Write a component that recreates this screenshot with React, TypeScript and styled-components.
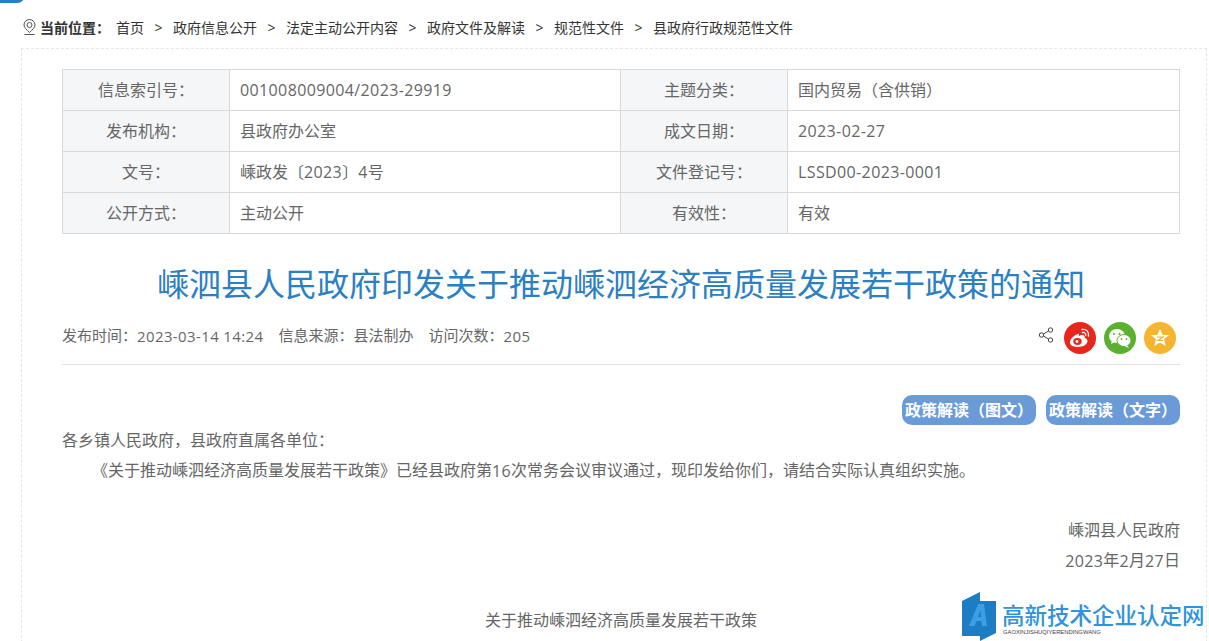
import styled, { createGlobalStyle } from "styled-components";

const FONT = `"Open Sans", "Noto Sans CJK SC", sans-serif`;

const GlobalStyle = createGlobalStyle`
  html, body {
    margin: 0;
    padding: 0;
    background: #fff;
    height: 641px;
    overflow: hidden;
  }
  body {
    font-family: ${FONT};
    color: #666;
  }
`;

const Page = styled.div`
  position: relative;
  width: 1209px;
  height: 641px;
  overflow: hidden;
`;

const TopAccent = styled.div`
  position: absolute;
  left: 0;
  top: -6px;
  width: 25px;
  height: 9px;
  background: #2b7fc3;
  border-bottom-right-radius: 8px;
`;

const Breadcrumb = styled.div`
  display: flex;
  align-items: center;
  height: 48px;
  padding: 6px 0 0 22px;
  box-sizing: border-box;
  font-size: 14px;
  color: #333;
`;

const CurrentLabel = styled.b`
  margin: 0 6px 0 3px;
  font-weight: 700;
`;

const Crumb = styled.span`
  white-space: nowrap;
`;

const Arrow = styled.span`
  display: inline-block;
  width: 29px;
  text-align: center;
`;

const Panel = styled.div`
  margin-left: 21px;
  width: 1186px;
  height: 640px;
  box-sizing: border-box;
  border: 1px dashed #e6e6e6;
  padding: 20px 27px 0 40px;
`;

const InfoTable = styled.div`
  display: grid;
  grid-template-columns: 167px 391px 167px 392px;
  grid-auto-rows: 41px;
  width: 1118px;
  border-top: 1px solid #d9d9d9;
  border-left: 1px solid #d9d9d9;
  box-sizing: border-box;
`;

const Cell = styled.div<{ $head?: boolean }>`
  display: flex;
  align-items: center;
  justify-content: ${(p) => (p.$head ? "center" : "flex-start")};
  padding: ${(p) => (p.$head ? "0 0 2px" : "0 0 2px 10px")};
  box-sizing: border-box;
  background: ${(p) => (p.$head ? "#f5f6f8" : "#fff")};
  border-right: 1px solid #d9d9d9;
  border-bottom: 1px solid #d9d9d9;
  font-size: 16px;
  color: #666;
  white-space: nowrap;
`;

const Num = styled.span`
  letter-spacing: 0.38px;
  position: relative;
  top: 1px;
`;

const Title = styled.h1`
  margin: 28px 0 0;
  width: 1118px;
  height: 44px;
  line-height: 44px;
  text-align: center;
  font-size: 32px;
  font-weight: 400;
  color: #2b7fc3;
  white-space: nowrap;
`;

const MetaRow = styled.div`
  display: flex;
  align-items: center;
  justify-content: space-between;
  width: 1118px;
  height: 58px;
  margin-top: 1px;
  box-sizing: border-box;
  border-bottom: 1px solid #e2e2e2;
  padding-bottom: 2px;
`;

const MetaText = styled.div`
  display: flex;
  gap: 15px;
  font-size: 15px;
  color: #666;
`;

const Share = styled.div`
  display: flex;
  align-items: center;
  gap: 8px;
  padding-right: 4px;
  margin-top: 6px;
`;

const ShareCircle = styled.span<{ $bg: string }>`
  display: flex;
  align-items: center;
  justify-content: center;
  width: 32px;
  height: 32px;
  border-radius: 50%;
  background: ${(p) => p.$bg};
`;

const ShareIcon = styled.svg`
  margin: -5px 2px 0 0;
`;

const Actions = styled.div`
  display: flex;
  justify-content: flex-end;
  gap: 10px;
  width: 1118px;
  margin-top: 30px;
`;

const ActionButton = styled.span`
  display: block;
  width: 134px;
  height: 30px;
  line-height: 30px;
  text-align: center;
  background: #6a9bd8;
  border-radius: 10px;
  color: #fff;
  font-size: 16px;
  font-weight: 700;
  white-space: nowrap;
`;

const Article = styled.div`
  width: 1118px;
  font-size: 16px;
  line-height: 30px;
  color: #666;
`;

const Para = styled.p<{ $indent?: boolean; $right?: boolean; $center?: boolean }>`
  margin: 0;
  text-indent: ${(p) => (p.$indent ? "30px" : "0")};
  text-align: ${(p) => (p.$right ? "right" : p.$center ? "center" : "left")};
  white-space: nowrap;
`;

const Gap = styled.div<{ $h: number }>`
  height: ${(p) => p.$h}px;
`;

const Watermark = styled.div`
  position: absolute;
  left: 962px;
  top: 591px;
  display: flex;
  align-items: flex-start;
  gap: 6px;
`;

const WatermarkText = styled.div`
  display: flex;
  flex-direction: column;
  margin-top: 12px;
`;

const WatermarkTitle = styled.div`
  font-size: 22.5px;
  line-height: 25px;
  font-weight: 500;
  color: #2f93dd;
  white-space: nowrap;
`;

const WatermarkSub = styled.div`
  margin-left: 1px;
  font-size: 5.8px;
  line-height: 8px;
  color: #444;
  white-space: nowrap;
  font-family: "Liberation Sans", sans-serif;
`;

const crumbs = ["首页", "政府信息公开", "法定主动公开内容", "政府文件及解读", "规范性文件", "县政府行政规范性文件"];

const rows = [
  ["信息索引号：", <Num>001008009004/2023-29919</Num>, "主题分类：", "国内贸易（含供销）"],
  ["发布机构：", "县政府办公室", "成文日期：", <Num>2023-02-27</Num>],
  ["文号：", <>嵊政发〔<Num>2023</Num>〕<Num>4</Num>号</>, "文件登记号：", <Num>LSSD00-2023-0001</Num>],
  ["公开方式：", "主动公开", "有效性：", "有效"],
];

const App = () => {
  return (
    <Page>
      <GlobalStyle />
      <TopAccent />
      <Breadcrumb>
        <svg width="15" height="17" viewBox="0 0 15 17" fill="none" stroke="#555" strokeWidth="1">
          <path d="M7.5 13.5C4.5 10.5 2 8.5 2 6a5.5 5.5 0 0 1 11 0c0 2.5-2.5 4.500-5.500 7.500z" />
          <circle cx="7.500" cy="6" r="2.500" />
          <path d="M2.500 15.500h10" />
        </svg>
        <CurrentLabel>当前位置：</CurrentLabel>
        {crumbs.map((crumb, index) => (
          <Crumb key={crumb}>
            {index > 0 && <Arrow>&gt;</Arrow>}
            {crumb}
          </Crumb>
        ))}
      </Breadcrumb>
      <Panel>
        <InfoTable>
          {rows.map((row, rowIndex) =>
            row.map((content, index) => (
              <Cell key={`${rowIndex}-${index}`} $head={index % 2 === 0}>
                {content}
              </Cell>
            ))
          )}
        </InfoTable>
        <Title>嵊泗县人民政府印发关于推动嵊泗经济高质量发展若干政策的通知</Title>
        <MetaRow>
          <MetaText>
            <span>发布时间：<Num>2023-03-14 14:24</Num></span>
            <span>信息来源：县法制办</span>
            <span>访问次数：<Num>205</Num></span>
          </MetaText>
          <Share>
            <ShareIcon width="16" height="16" viewBox="0 0 16 16" fill="none" stroke="#444" strokeWidth="1">
              <circle cx="12.500" cy="3" r="2.200" />
              <circle cx="3.500" cy="8" r="2.200" />
              <circle cx="12.500" cy="13" r="2.200" />
              <path d="M5.500 7l5-3M5.500 9l5 3" />
            </ShareIcon>
            <ShareCircle $bg="#e8261c">
              <svg width="26" height="22" viewBox="0 0 26 22">
                <path d="M11 7c-4 1-8 5-8 8.500 0 3 3.500 4.500 8 4.500 5.500 0 9.500-3 9.500-6 0-2-2-2.800-3-3 .6-1.500.2-3-2-3-1.200 0-2.500.5-3.500 1 .2-1.500-.3-2.700-1-2.500z" fill="#fff" />
                <ellipse cx="10.500" cy="14.500" rx="4.200" ry="3.400" fill="#e8261c" />
                <circle cx="10" cy="14.500" r="1.400" fill="#fff" />
                <path d="M15 2.500c4-1 7.500 2.500 6.500 6.500M15.500 5.500c2-.5 3.600 1.200 3.200 3.200" fill="none" stroke="#fff" strokeWidth="1.300" strokeLinecap="round" />
              </svg>
            </ShareCircle>
            <ShareCircle $bg="#5bb030">
              <svg width="26" height="22" viewBox="0 0 26 22">
                <ellipse cx="10" cy="9" rx="8" ry="7" fill="#fff" />
                <path d="M5 13l-1 4 4-2z" fill="#fff" />
                <circle cx="7" cy="7" r="1" fill="#5bb030" />
                <circle cx="12.500" cy="7" r="1" fill="#5bb030" />
                <ellipse cx="17" cy="13.500" rx="7" ry="6" fill="#fff" stroke="#5bb030" strokeWidth="1" />
                <path d="M20 18l2 3-4-1.500z" fill="#fff" />
                <circle cx="14.500" cy="12" r=".9" fill="#5bb030" />
                <circle cx="19.500" cy="12" r=".9" fill="#5bb030" />
              </svg>
            </ShareCircle>
            <ShareCircle $bg="#f4b52f">
              <svg width="22" height="22" viewBox="0 0 22 22">
                <path d="M11 2l2.800 6H20l-5 4.300L16.800 19 11 15.500 5.200 19 7 12.300 2 8h6.200z" fill="#fff" />
                <path d="M8 10h6l-5 3.500h5" fill="none" stroke="#f4b52f" strokeWidth="1.200" />
              </svg>
            </ShareCircle>
          </Share>
        </MetaRow>
        <Actions>
          <ActionButton>政策解读（图文）</ActionButton>
          <ActionButton>政策解读（文字）</ActionButton>
        </Actions>
        <Article>
          <Para>各乡镇人民政府，县政府直属各单位：</Para>
          <Para $indent>《关于推动嵊泗经济高质量发展若干政策》已经县政府第<Num>16</Num>次常务会议审议通过，现印发给你们，请结合实际认真组织实施。</Para>
          <Gap $h={30} />
          <Para $right>嵊泗县人民政府</Para>
          <Para $right><Num>2023</Num>年<Num>2</Num>月<Num>27</Num>日</Para>
          <Gap $h={30} />
          <Para $center>关于推动嵊泗经济高质量发展若干政策</Para>
        </Article>
      </Panel>
      <Watermark>
        <svg width="34" height="50" viewBox="0 0 34 50">
          <path d="M0 10L18 1v9h16v32l-16 8v-5H0z" fill="#1c7cc4" />
          <path d="M7 35l9-22h6l3 22h-5l-.5-5h-5l-2 5zm9-9h3l-.5-7z" fill="#3a9fe4" />
        </svg>
        <WatermarkText>
          <WatermarkTitle>高新技术企业认定网</WatermarkTitle>
          <WatermarkSub>GAOXINJISHUQIYERENDINGWANG</WatermarkSub>
        </WatermarkText>
      </Watermark>
    </Page>
  );
};

export default App;
